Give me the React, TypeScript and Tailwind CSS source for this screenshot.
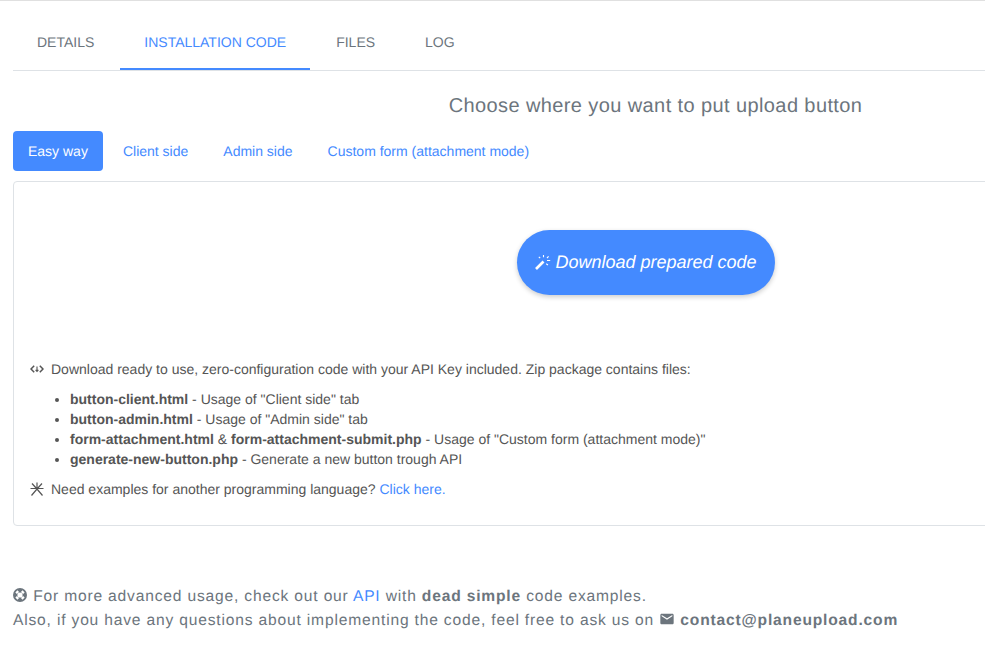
import { MdEmail } from 'react-icons/md'

const tabs = ['DETAILS', 'INSTALLATION CODE', 'FILES', 'LOG']
const pills = ['Easy way', 'Client side', 'Admin side', 'Custom form (attachment mode)']

function WandIcon() {
  return (
    <svg viewBox="0 0 16 16" className="w-4 h-4 mr-1 shrink-0" fill="none" stroke="currentColor">
      <path d="M1 15 L8.5 7.5" strokeWidth="2.6" />
      <path d="M8.5 1v2.2M3.8 2.8l1.4 1.4M13.6 2.4l-1.6 1.6M12 6.5h3.2M11.2 9.8l1.8 1.2" strokeWidth="1.1" />
    </svg>
  )
}

function CodeIcon() {
  return (
    <svg viewBox="0 0 14 14" className="w-[14px] h-[14px] mr-[7px] shrink-0" fill="none" stroke="currentColor" strokeWidth="1.5">
      <path d="M4.2 3.8 L1 7 L4.2 10.2 M9.8 3.8 L13 7 L9.8 10.2" />
      <path d="M7 4.5 V9 M5.6 7.8 L7 9.4 L8.4 7.8" strokeWidth="1.1" />
    </svg>
  )
}

function StarIcon() {
  return (
    <svg viewBox="0 0 14 14" className="w-[14px] h-[14px] mr-[7px] shrink-0" fill="none" stroke="currentColor" strokeWidth="1.2">
      <path d="M7 0.5 V7 M0.5 6.5 H13.5 M2 1.5 L7 7 L12 1.5 M1.5 13.5 L7 7 L12.5 13.5" />
    </svg>
  )
}

function LifeRingIcon() {
  return (
    <svg viewBox="0 0 14 14" className="inline w-[14px] h-[14px] mr-[1px] align-[-1px]">
      <circle cx="7" cy="7" r="7" fill="currentColor" />
      <circle cx="7" cy="7" r="2.6" fill="#fff" />
      <path d="M3.4 3.4 L5 5 M10.6 3.4 L9 5 M3.4 10.6 L5 9 M10.6 10.6 L9 9" stroke="#fff" strokeWidth="3" />
    </svg>
  )
}

export default function App() {
  return (
    <div className="w-[985px] h-[659px] overflow-hidden bg-white border-t border-[#e0e0e0] font-['Liberation_Sans',sans-serif] text-sm text-[#555] [text-rendering:geometricPrecision]">
      <div className="w-[1285px] ml-[13px]">
        <div className="flex gap-0.5 h-[70px] border-b border-[#dee2e6]">
          {tabs.map((tab, i) => (
            <div
              key={tab}
              className={
                i === 1
                  ? 'px-6 h-[69px] pt-[33px] text-[#448aff] border-b-2 border-[#448aff] leading-[17px]'
                  : 'px-6 h-[69px] pt-[33px] text-[#6c757d] leading-[17px]'
              }
            >
              {tab}
            </div>
          ))}
        </div>

        <h2 className="mt-[23px] text-center text-xl leading-6 tracking-[0.4px] text-[#6c757d]">
          Choose where you want to put upload button
        </h2>

        <div className="flex gap-[5px] mt-[13px]">
          {pills.map((pill, i) => (
            <div
              key={pill}
              className={
                i === 0
                  ? 'px-[15px] h-10 leading-10 rounded bg-[#448aff] text-white'
                  : 'px-[15px] h-10 leading-10 text-[#448aff]'
              }
            >
              {pill}
            </div>
          ))}
        </div>

        <div className="mt-[10px] h-[345px] w-[1266px] border border-[#dee2e6] rounded-sm px-4 pt-12">
          <div className="flex justify-center">
            <div className="flex items-center h-[65px] pb-0.5 px-[18px] rounded-full bg-[#448aff] text-white text-lg italic shadow-[0_2px_5px_rgba(0,0,0,0.2)]">
              <WandIcon />
              Download prepared code
            </div>
          </div>

          <p className="flex items-center mt-[64px] leading-5">
            <CodeIcon />
            Download ready to use, zero-configuration code with your API Key included. Zip package contains files:
          </p>
          <ul className="list-disc pl-10 mt-[10px] leading-5">
            <li><b>button-client.html</b> - Usage of "Client side" tab</li>
            <li><b>button-admin.html</b> - Usage of "Admin side" tab</li>
            <li><b>form-attachment.html</b> &amp; <b>form-attachment-submit.php</b> - Usage of "Custom form (attachment mode)"</li>
            <li><b>generate-new-button.php</b> - Generate a new button trough API</li>
          </ul>
          <p className="flex items-center mt-[10px] leading-5">
            <StarIcon />
            <span className="whitespace-pre">Need examples for another programming language? <span className="text-[#448aff]">Click here.</span></span>
          </p>
        </div>

        <div className="mt-[59px] text-[15.6px] leading-6 tracking-[0.82px] text-[#6c757d]">
          <p>
            <LifeRingIcon /> For more advanced usage, check out our{' '}
            <span className="text-[#448aff]">API</span> with <b>dead simple</b> code examples.
          </p>
          <p>
            Also, if you have any questions about implementing the code, feel free to ask us on{' '}
            <MdEmail className="inline w-4 h-4 align-[-2px]" /> <b>contact@planeupload.com</b>
          </p>
        </div>
      </div>
    </div>
  )
}
